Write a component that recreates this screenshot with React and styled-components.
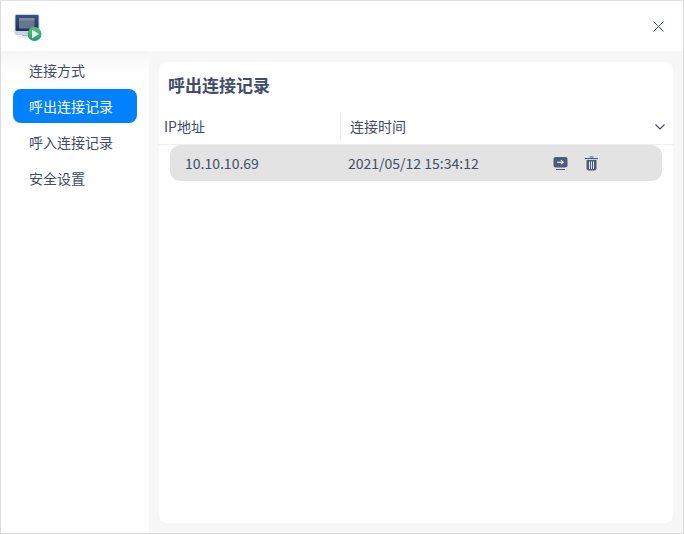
import React from "react";
import styled, { createGlobalStyle } from "styled-components";

const Global = createGlobalStyle`
  html, body { margin: 0; padding: 0; background: #fff; }
  body { font-family: "Noto Sans CJK SC", "Noto Sans", sans-serif; }
`;

const Window = styled.div`
  width: 684px;
  height: 534px;
  box-sizing: border-box;
  border: 1px solid #dcdcdc;
  border-top-color: #e2e2e2;
  display: flex;
  flex-direction: column;
  background: #fff;
  color: #414d68;
`;

const TitleBar = styled.div`
  height: 50px;
  flex-shrink: 0;
  display: flex;
  align-items: center;
  justify-content: space-between;
  padding: 0 19px 0 13px;
`;

const Body = styled.div`
  flex: 1;
  display: flex;
  min-height: 0;
`;

const Sidebar = styled.div`
  width: 148px;
  flex-shrink: 0;
  box-sizing: border-box;
  padding: 2px 12px 0;
  display: flex;
  flex-direction: column;
  gap: 2px;
  background: linear-gradient(#f5f5f5, #fff 22px);
`;

const NavItem = styled.div`
  height: 34px;
  line-height: 34px;
  padding-left: 16px;
  border-radius: 8px;
  font-size: 14px;
  color: ${(p) => (p.$active ? "#fff" : "#414d68")};
  background: ${(p) => (p.$active ? "#0081ff" : "transparent")};
`;

const Content = styled.div`
  flex: 1;
  background: #f7f7f7;
  padding: 11px 10px 10px;
  display: flex;
`;

const Panel = styled.div`
  flex: 1;
  background: #fff;
  border-radius: 8px;
  display: flex;
  flex-direction: column;
`;

const Heading = styled.h2`
  margin: 0;
  padding: 9px 0 0 9px;
  height: 37px;
  box-sizing: border-box;
  font-size: 17px;
  line-height: 27px;
  font-weight: 700;
  color: #414d68;
`;

const HeaderRow = styled.div`
  height: 33px;
  margin-top: 11px;
  padding-bottom: 1px;
  display: flex;
  align-items: center;
  border-bottom: 1px solid #f0f0f0;
  font-size: 14px;
`;

const HeaderCell = styled.div`
  width: ${(p) => p.$width}px;
  height: 29px;
  line-height: 28px;
  box-sizing: border-box;
  padding-left: ${(p) => p.$pad}px;
  border-right: ${(p) => (p.$divider ? "1px solid #ececec" : "none")};
`;

const Sort = styled.svg`
  margin-left: auto;
  margin-right: 8px;
`;

const Record = styled.div`
  margin: 0 11px;
  height: 36px;
  display: flex;
  align-items: center;
  background: #e3e3e3;
  border-radius: 10px;
  font-size: 14px;
`;

const Address = styled.div`
  width: 178px;
  padding-left: 15px;
  box-sizing: border-box;
`;

const Time = styled.div`
  width: 205px;
`;

const Actions = styled.div`
  display: flex;
  align-items: center;
  gap: 16px;
`;

const AppIcon = () => (
  <svg width="29" height="30" viewBox="0 0 29 30">
    <defs>
      <linearGradient id="scr" x1="0" y1="0" x2="0" y2="1">
        <stop offset="0" stopColor="#34547e" />
        <stop offset="1" stopColor="#1f3350" />
      </linearGradient>
      <linearGradient id="play" x1="0" y1="0" x2="0" y2="1">
        <stop offset="0" stopColor="#63c07c" />
        <stop offset="1" stopColor="#1f9a78" />
      </linearGradient>
    </defs>
    <rect x="0.5" y="3" width="25" height="21" rx="2" fill="#c9d3e8" />
    <rect x="1.5" y="4" width="23" height="16" rx="1" fill="url(#scr)" />
    <rect x="5" y="7" width="15.5" height="10.5" rx="1" fill="#66768f" />
    <rect x="5" y="7" width="15.5" height="2.5" fill="#7c8ba1" />
    <rect x="8" y="24" width="9" height="1.5" fill="#b4bdcc" />
    <rect x="6" y="25.5" width="12" height="1" fill="#dde1e7" />
    <circle cx="20.5" cy="23" r="7" fill="url(#play)" />
    <path d="M18 18.8 L25 23 L18 27.5 Z" fill="#e9f6ee" />
  </svg>
);

const CloseIcon = () => (
  <svg width="11" height="11" viewBox="0 0 11 11">
    <path d="M.5.5l10 10M10.5.5l-10 10" stroke="#414d68" strokeWidth="1" fill="none" />
  </svg>
);

const ConnectIcon = () => (
  <svg width="15" height="15" viewBox="0 0 15 15">
    <rect x="0.5" y="1" width="14" height="10.5" rx="2" fill="#4d5b78" />
    <rect x="3" y="13" width="9" height="1" fill="#4d5b78" />
    <path d="M4 6.2h6M8 4.2L10.2 6.2 8 8.2" stroke="#fff" strokeWidth="1.1" fill="none" />
  </svg>
);

const TrashIcon = () => (
  <svg width="15" height="15" viewBox="0 0 15 15">
    <rect x="5.5" y="0.5" width="4" height="1" fill="#4d5b78" />
    <rect x="1" y="2" width="13" height="1.1" fill="#4d5b78" />
    <path
      d="M2.5 4h10v8.5a2 2 0 0 1-2 2h-6a2 2 0 0 1-2-2zM5 5.5v7.5h1V5.5zM7 5.5v7.5h1V5.5zM9 5.5v7.5h1V5.5z"
      fill="#4d5b78"
      fillRule="evenodd"
    />
  </svg>
);

const navItems = ["连接方式", "呼出连接记录", "呼入连接记录", "安全设置"];

export default function App() {
  return (
    <>
      <Global />
      <Window>
        <TitleBar>
          <AppIcon />
          <CloseIcon />
        </TitleBar>
        <Body>
          <Sidebar>
            {navItems.map((name, i) => (
              <NavItem key={name} $active={i === 1}>
                {name}
              </NavItem>
            ))}
          </Sidebar>
          <Content>
            <Panel>
              <Heading>呼出连接记录</Heading>
              <HeaderRow>
                <HeaderCell $width={182} $pad={5} $divider>
                  IP地址
                </HeaderCell>
                <HeaderCell $width={120} $pad={9}>
                  连接时间
                </HeaderCell>
                <Sort width="10" height="6" viewBox="0 0 10 6">
                  <path d="M.5.5L5 5 9.5.5" stroke="#414d68" strokeWidth="1.2" fill="none" />
                </Sort>
              </HeaderRow>
              <Record>
                <Address>10.10.10.69</Address>
                <Time>2021/05/12 15:34:12</Time>
                <Actions>
                  <ConnectIcon />
                  <TrashIcon />
                </Actions>
              </Record>
            </Panel>
          </Content>
        </Body>
      </Window>
    </>
  );
}
